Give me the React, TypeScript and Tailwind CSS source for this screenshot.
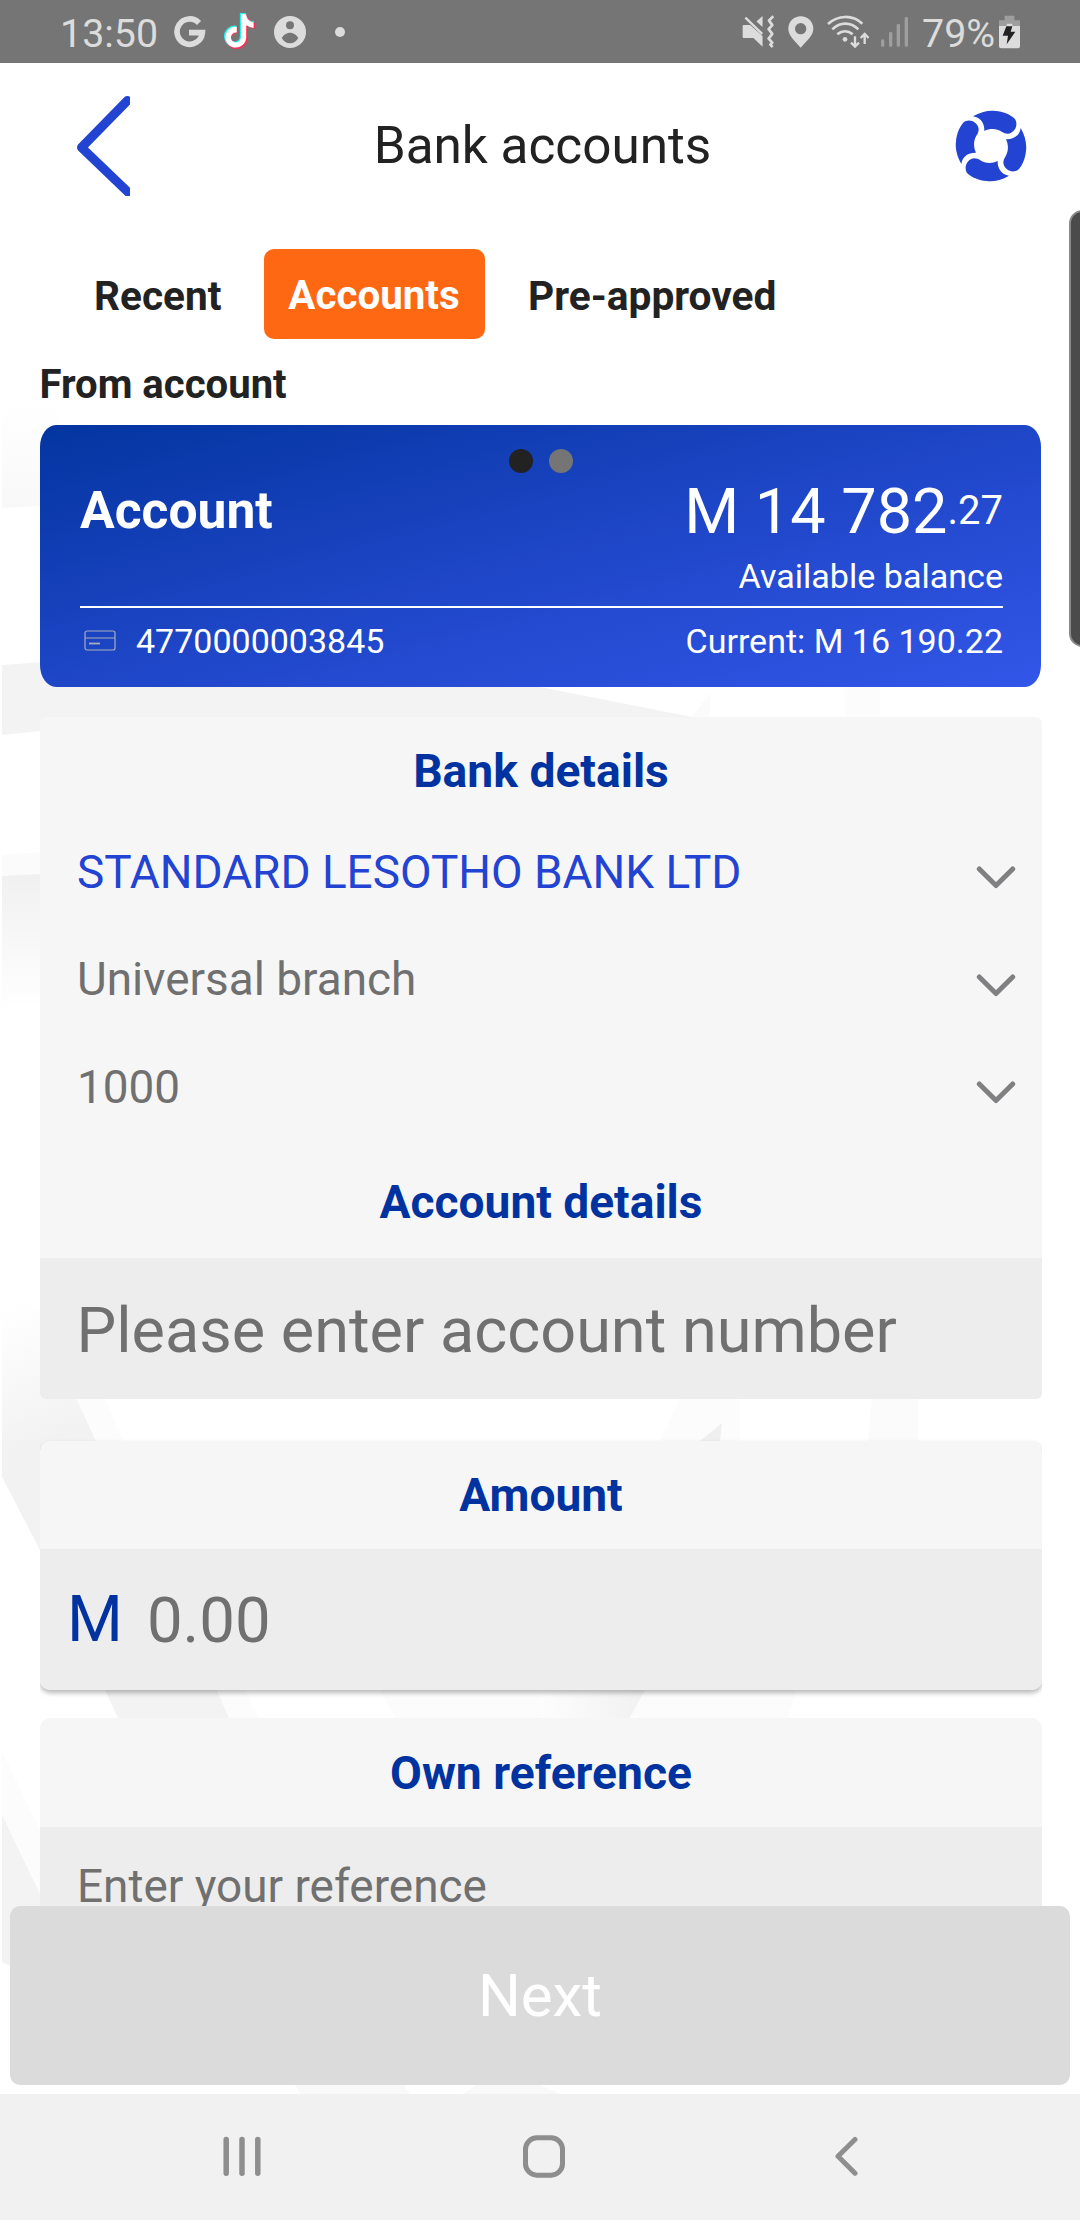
import React from "react";

const STATUS = "#dcdcdc";

function Watermark() {
  return (
    <svg className="absolute inset-0 h-[2220px] w-[1080px]" viewBox="0 0 1080 2220" aria-hidden="true">
      <defs>
        <linearGradient id="fadeIn" x1="0" y1="0" x2="0" y2="1">
          <stop offset="0" stopColor="#ffffff" />
          <stop offset="1" stopColor="#f8f8f8" />
        </linearGradient>
        <linearGradient id="fadeOut" x1="0" y1="0" x2="0" y2="1">
          <stop offset="0" stopColor="#f0f0f0" />
          <stop offset="1" stopColor="#ffffff" />
        </linearGradient>
        <linearGradient id="ray" gradientUnits="userSpaceOnUse" x1="0" y1="1310" x2="50" y2="1440">
          <stop offset="0" stopColor="#ffffff" />
          <stop offset="1" stopColor="#f2f2f2" />
        </linearGradient>
        <linearGradient id="side" x1="0" y1="0" x2="1" y2="0">
          <stop offset="0" stopColor="#fdfdfd" />
          <stop offset="1" stopColor="#f1f1f1" />
        </linearGradient>
      </defs>
      <path d="M2 405H60V505L2 508Z" fill="url(#fadeIn)" />
      <path d="M2 665L60 661V687H540L692 717V740H60V729L2 735Z" fill="#f3f3f3" />
      <path d="M692 717L710 693V717Z" fill="#fbfbfb" />
      <path d="M845 687H880V717H846Z" fill="#fcfcfc" />
      <path d="M2 855L60 851V876H2Z" fill="#fbfbfb" />
      <path d="M2 876L60 873V1010H2Z" fill="url(#fadeOut)" />
      <path d="M76 1398H105L123 1441H96Z" fill="#fcfcfc" />
      <path d="M2 1290L40 1310L76 1398L96 1441V1600H66L2 1477Z" fill="url(#ray)" />
      <path d="M680 1398H740V1441H660Z" fill="#fcfcfc" />
      <path d="M872 1398H918V1441H868Z" fill="#fbfbfb" />
      <path d="M722 1423L720 1441H700Z" fill="#efefef" />
      <path d="M105 1690H217L229 1718H118Z" fill="#f3f3f3" />
      <path d="M217 1690H246L258 1718H229Z" fill="#fcfcfc" />
      <path d="M380 1690H540V1718H395Z" fill="#fcfcfc" />
      <path d="M540 1690H645L630 1718H540Z" fill="url(#side)" />
      <path d="M645 1690H796L788 1718H630Z" fill="#fcfcfc" />
      <path d="M2 1752L60 1870V1930L2 1815Z" fill="#fcfcfc" />
      <path d="M2 1815L60 1935V1990L2 1962Z" fill="#f3f3f3" />
      <path d="M295 2085H404L410 2094H300ZM476 2085H540L560 2094H463Z" fill="#f9f9f9" />
    </svg>
  );
}

function StatusBar() {
  return (
    <div className="relative flex h-[63px] shrink-0 items-center bg-[#757575] pl-[60px] pr-[60px] text-[39.4px] leading-none text-[#dcdcdc]">
      <span className="w-[98px] pt-[4px]">13:50</span>
      <svg className="ml-[15px] h-[34px] w-[34px] shrink-0" viewBox="519 44 102 102" fill="none" stroke={STATUS} strokeWidth="17">
        <path d="M597 68A38 38 0 1 0 607 97H567" />
      </svg>
      <svg className="-mt-[1px] ml-[16px] h-[36px] w-[33px] shrink-0" viewBox="-22 -12 484 536">
        <path transform="translate(-12 -12)" fill="#25f4ee" d="M448,209.91a210.06,210.06,0,0,1-122.77-39.25V349.38A162.55,162.55,0,1,1,185,188.31V278.2a74.62,74.62,0,1,0,52.23,71.18V0l88,0a121.18,121.18,0,0,0,1.86,22.17h0A122.18,122.18,0,0,0,381,102.39a121.43,121.43,0,0,0,67,20.14Z" />
        <path transform="translate(14 14)" fill="#fe2c55" d="M448,209.91a210.06,210.06,0,0,1-122.77-39.25V349.38A162.55,162.55,0,1,1,185,188.31V278.2a74.62,74.62,0,1,0,52.23,71.18V0l88,0a121.18,121.18,0,0,0,1.86,22.17h0A122.18,122.18,0,0,0,381,102.39a121.43,121.43,0,0,0,67,20.14Z" />
        <path fill="#ffffff" d="M430,209.91a210.06,210.06,0,0,1-110-39.25V349.38A155,155,0,1,1,180,194V278.2a74.62,74.62,0,1,0,62,71.18V8l78,0a121.18,121.18,0,0,0,1.86,22.17h0A122.18,122.18,0,0,0,376,108a121.43,121.43,0,0,0,54,20.14Z" />
      </svg>
      <svg className="ml-[18px] h-[32px] w-[32px] shrink-0" viewBox="822 47 96 96">
        <circle cx="870" cy="95" r="48" fill={STATUS} />
        <circle cx="870" cy="75" r="12" fill="#757575" />
        <path d="M845 113C850 104 860 97 870 97S890 104 895 113C889 123 880 129 870 129S851 123 845 113Z" fill="#757575" />
      </svg>
      <span className="ml-[29px] h-[10px] w-[10px] rounded-full bg-[#dcdcdc]" />

      <div className="ml-auto flex items-center">
        <svg className="h-[33px] w-[33px]" viewBox="28 30 98 98" fill={STATUS}>
          <path d="M33 60H52L89 92V124L62 98H33Q30 98 30 95V63Q30 60 33 60Z" />
          <path d="M38 38L88 86" stroke={STATUS} strokeWidth="7" />
          <path d="M89 33V66L71 49Z" />
          <path d="M121 34L108 46L118 60L107 72L118 86L107 100L118 112L112 118L119 125" fill="none" stroke={STATUS} strokeWidth="8" strokeLinejoin="round" />
        </svg>
        <svg className="ml-[13px] h-[32px] w-[26px]" viewBox="170 31 78 96" fill={STATUS}>
          <path fillRule="evenodd" d="M208 32C229 32 246 48 246 69C246 91 226 104 208 126C190 104 171 91 171 69C171 48 188 32 208 32ZM208 52A17 17 0 1 0 208 86A17 17 0 1 0 208 52Z" />
        </svg>
        <svg className="ml-[13px] h-[34px] w-[42px]" viewBox="289 26 126 102" fill="none" stroke={STATUS} strokeWidth="8">
          <path d="M292 53C322 25 366 25 395 52M305 69C328 46 360 46 383 69M320 84C334 72 352 72 366 84" />
          <circle cx="343" cy="99" r="7" fill={STATUS} stroke="none" />
          <path d="M373 90V120M361 109L373 121L385 109M402 113V84M390 95L402 83L414 95" strokeWidth="7" />
        </svg>
        <svg className="ml-[11px] h-[32px] w-[29px]" viewBox="447 32 87 96" stroke="#9e9e9e" strokeWidth="10" strokeLinecap="round">
          <path d="M455 107V120M479 84V120M502 60V120M526 39V120" />
        </svg>
        <span className="ml-[13px] w-[75px] pt-[4px]">79%</span>
        <svg className="ml-[2px] h-[34px] w-[21px]" viewBox="897 44 63 102">
          <path d="M914 46H943V60H960V80H897V60H914Z" fill="#9e9e9e" />
          <path d="M897 77H920V70H937V77H960V138Q960 144 954 144H903Q897 144 897 138Z" fill={STATUS} />
          <path d="M919 78H937L932 94H946L920 132L924 106H908Z" fill="#222222" />
        </svg>
      </div>
    </div>
  );
}

const BLADE =
  "M82 47C104 34 130 28 150 31C172 33 192 41 205 52C215 62 214 78 206 88C196 101 182 102 168 93C153 83 132 83 116 91C117 70 106 50 82 47Z";

function Logo() {
  return (
    <svg className="h-[72px] w-[72px]" viewBox="28 28 216 216" fill="#2343d2">
      {[0, 90, 180, 270].map((angle) => (
        <path key={angle} d={BLADE} transform={`rotate(${angle} 136 136)`} />
      ))}
    </svg>
  );
}

function Header() {
  return (
    <header className="flex h-[165px] shrink-0 items-center justify-between pl-[76px] pr-[53px]">
      <svg className="h-[100px] w-[54px]" viewBox="0 0 54 100" fill="none" stroke="#2343d2" strokeWidth="9" strokeLinecap="round" strokeLinejoin="round">
        <path d="M51.500 4.500L5.500 51.500L55 99" />
      </svg>
      <h1 className="text-[51.3px] leading-none text-[#222222]">Bank accounts</h1>
      <Logo />
    </header>
  );
}

function Tabs() {
  return (
    <nav className="mt-[21px] flex h-[90px] shrink-0 items-center pl-[94px] font-bold leading-none text-[#222222]">
      <span className="w-[169.500px] pt-[4px] text-[40.6px]">Recent</span>
      <span className="flex h-[90px] w-[221px] items-center justify-center rounded-[10px] bg-[#ff6813] pt-[5px] text-[40.3px] text-white">
        Accounts
      </span>
      <span className="pl-[43.500px] pt-[4px] text-[40.7px]">Pre-approved</span>
    </nav>
  );
}

function AccountCard() {
  return (
    <section className="relative ml-[40px] flex h-[262px] w-[1001px] shrink-0 flex-col rounded-[16px/22px] bg-[linear-gradient(to_bottom_right,#0335a0,#1e46c7_50%,#3256e8)] pl-[40px] pr-[38px] pt-[51px] leading-none text-white">
      <div className="absolute left-[469px] top-[24px] flex gap-[16px]">
        <span className="h-[24px] w-[24px] rounded-full bg-[#222222]" />
        <span className="h-[24px] w-[24px] rounded-full bg-[#757575]" />
      </div>
      <div className="flex h-[70px] items-center justify-between">
        <span className="text-[51.6px] font-bold">Account</span>
        <span className="flex items-center">
          <span className="text-[63px]">M 14 782</span>
          <span className="text-[40px]">.27</span>
        </span>
      </div>
      <div className="flex h-[60px] items-center justify-end text-[34.1px]">Available balance</div>
      <div className="h-[2px] shrink-0 bg-white" />
      <div className="flex h-[64px] items-center text-[34px]">
        <svg className="ml-[4px] mr-[20px] h-[21px] w-[32px]" viewBox="0 0 32 21" fill="none" stroke="#a9adbb">
          <rect x="1" y="1" width="30" height="19" rx="2" strokeWidth="1.200" />
          <path d="M1 8H31" strokeWidth="1" />
          <path d="M5 13.500H16" strokeWidth="1.800" />
        </svg>
        <span className="pt-[1px]">4770000003845</span>
        <span className="ml-auto pt-[1px]">Current: M 16 190.22</span>
      </div>
    </section>
  );
}

function SelectRow({ label, active = false }: { label: string; active?: boolean }) {
  return (
    <div className="flex h-[107.500px] items-center justify-between pl-[37px] pr-[26px]">
      <span className={active ? "text-[#2343d2]" : "text-[#707070]"}>{label}</span>
      <svg className="mt-[9px] h-[24px] w-[40px]" viewBox="0 0 40 24" fill="none" stroke="#808083" strokeWidth="5" strokeLinecap="round" strokeLinejoin="round">
        <path d="M3.300 4L20 20.500L36.700 4" />
      </svg>
    </div>
  );
}

function BankPanel() {
  return (
    <section className="ml-[40px] mt-[30px] w-[1002px] shrink-0 overflow-hidden rounded-[6px] bg-[#f6f6f6] text-[45.9px] leading-none">
      <h2 className="flex h-[102px] items-center justify-center pt-[7px] text-[46.2px] font-bold text-[#0033a0]">Bank details</h2>
      <SelectRow label="STANDARD LESOTHO BANK LTD" active />
      <SelectRow label="Universal branch" />
      <SelectRow label="1000" />
      <h2 className="flex h-[116.500px] items-center justify-center pt-[4px] text-[46.1px] font-bold text-[#0033a0]">Account details</h2>
      <div className="flex h-[140.500px] items-center bg-[#ededed] pl-[36.500px] pt-[4px] text-[63px] text-[#707070]">
        Please enter account number
      </div>
    </section>
  );
}

function AmountPanel() {
  return (
    <div className="ml-[40px] mt-[42.500px] w-[1002px] shrink-0 [clip-path:inset(-4px_0_-14px_0)]">
      <section className="overflow-hidden rounded-[10px] bg-[#f6f6f6] leading-none shadow-[0_3px_5px_rgba(0,0,0,0.28)]">
        <h2 className="flex h-[108px] items-center justify-center text-[46.1px] font-bold text-[#0033a0]">Amount</h2>
        <div className="flex h-[141px] items-center gap-[24px] bg-[#ededed] pl-[27px]">
          <span className="pt-[1px] text-[64px] text-[#0033a0]">M</span>
          <span className="pt-[3px] text-[63.500px] text-[#707070]">0.00</span>
        </div>
      </section>
    </div>
  );
}

function ReferencePanel() {
  return (
    <section className="ml-[40px] mt-[28px] w-[1002px] shrink-0 overflow-hidden rounded-t-[10px] bg-[#f6f6f6] leading-none">
      <h2 className="flex h-[109px] items-center justify-center pt-[2px] text-[46.2px] font-bold text-[#0033a0]">Own reference</h2>
      <div className="flex h-[118px] items-center bg-[#ededed] pl-[37px] pt-[2px] text-[45.9px] text-[#707070]">Enter your reference</div>
    </section>
  );
}

function NavBar() {
  return (
    <footer className="mt-[9px] flex h-[126px] shrink-0 items-center bg-[#f1f1f1] pl-[222px]">
      <svg className="h-[42px] w-[40px]" viewBox="0 0 40 42" stroke="#8e8e8e" strokeWidth="5.500" strokeLinecap="round">
        <path d="M4.200 3.500V37.200M20 3.500V37.200M35.800 3.500V37.200" />
      </svg>
      <svg className="ml-[260px] h-[44px] w-[44px]" viewBox="0 0 44 44" fill="none" stroke="#8e8e8e" strokeWidth="5">
        <rect x="3.500" y="2.800" width="37" height="37.400" rx="11.500" />
      </svg>
      <svg className="ml-[268px] h-[42px] w-[26px]" viewBox="0 0 26 42" fill="none" stroke="#8e8e8e" strokeWidth="5" strokeLinecap="round" strokeLinejoin="round">
        <path d="M21 3.500L4 20.300L21 37.200" />
      </svg>
    </footer>
  );
}

export default function App() {
  return (
    <div className="relative h-[2220px] w-[1080px] overflow-hidden bg-white font-[Roboto,sans-serif]">
      <Watermark />
      <div className="relative flex h-full flex-col">
        <StatusBar />
        <Header />
        <main className="flex h-[1678px] shrink-0 flex-col overflow-hidden">
          <Tabs />
          <p className="flex h-[86px] shrink-0 items-center pl-[39.500px] pt-[7px] text-[40.1px] font-bold leading-none text-[#222222]">
            From account
          </p>
          <AccountCard />
          <BankPanel />
          <AmountPanel />
          <ReferencePanel />
        </main>
        <button className="mx-[10px] h-[179px] shrink-0 rounded-[10px] bg-[#dbdbdb] text-[60px] leading-none text-white">Next</button>
        <NavBar />
      </div>
      <div className="absolute -right-[16px] top-[210px] h-[437px] w-[27px] rounded-[14px] border-2 border-[#8a8a8a] bg-[#4b4b4b]" />
    </div>
  );
}
